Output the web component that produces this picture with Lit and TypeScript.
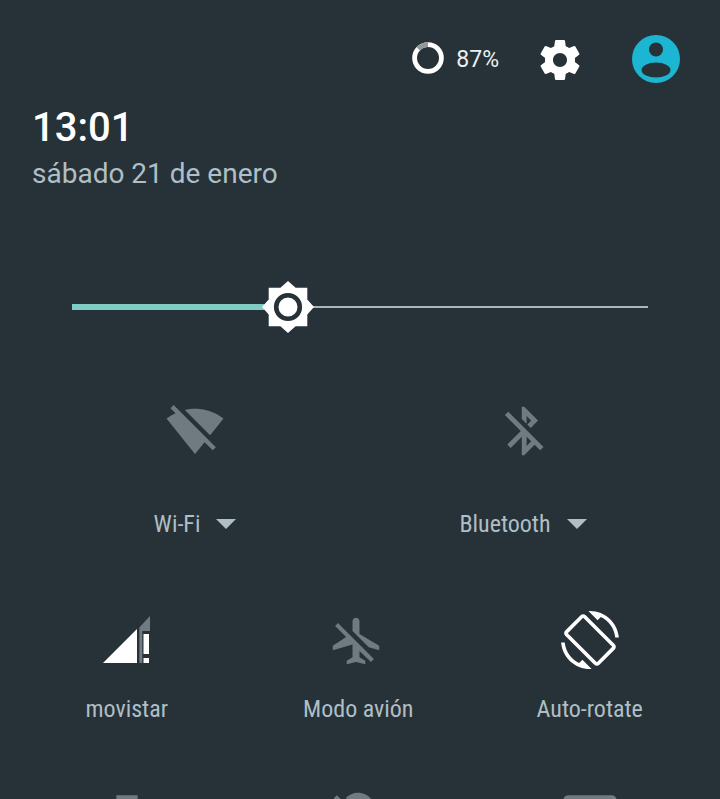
import { LitElement, html, css } from "lit";
import { customElement } from "lit/decorators.js";

const GEAR = "M19.43 12.98c.04-.32.07-.64.07-.98s-.03-.66-.07-.98l2.11-1.65c.19-.15.24-.42.12-.64l-2-3.46c-.12-.22-.39-.3-.61-.22l-2.49 1c-.52-.4-1.08-.73-1.69-.98l-.38-2.65C14.46 2.18 14.25 2 14 2h-4c-.25 0-.46.18-.49.42l-.38 2.65c-.61.25-1.17.59-1.69.98l-2.49-1c-.23-.09-.49 0-.61.22l-2 3.46c-.13.22-.07.49.12.64l2.11 1.65c-.04.32-.07.65-.07.98s.03.66.07.98l-2.11 1.65c-.19.15-.24.42-.12.64l2 3.46c.12.22.39.3.61.22l2.49-1c.52.4 1.08.73 1.69.98l.38 2.65c.03.24.24.42.49.42h4c.25 0 .46-.18.49-.42l.38-2.65c.61-.25 1.17-.59 1.69-.98l2.49 1c.23.09.49 0 .61-.22l2-3.46c.12-.22.07-.49-.12-.64l-2.11-1.65zM12 15.5c-1.93 0-3.5-1.57-3.5-3.5s1.57-3.5 3.5-3.5 3.5 1.57 3.5 3.5-1.57 3.5-3.5 3.5z";
const WIFI_OFF = "M23.64 7c-.45-.34-4.93-4-11.64-4-1.5 0-2.89.19-4.15.48L18.18 13.8 23.64 7zm-6.6 8.22L3.27 1.44 2 2.72l2.05 2.06C1.91 5.76.59 6.82.36 7l11.63 14.49.01.01.01-.01 3.9-4.86 3.32 3.32 1.27-1.27-3.46-3.46z";
const BT_OFF = "M13 5.83l1.88 1.88-1.6 1.6 1.41 1.41 3.02-3.02L12 2h-1v5.03l2 2v-3.2zM5.41 4L4 5.41 10.59 12 5 17.59 6.41 19 11 14.41V22h1l4.29-4.29 2.3 2.29L20 18.59 5.41 4zM13 18.17v-3.76l1.88 1.88L13 18.17z";
const PLANE_OFF = "M10.5 7.67V3.5c0-.83.67-1.5 1.5-1.5s1.5.67 1.5 1.5V9l8.5 5v2l-4.49-1.32-7.01-7.01zM19.73 19.73L5.5 5.5 4.27 4.27 3 5.54l4.73 4.73L2 14v2l8.5-2.5V19L8 20.5V22l4-1 4 1v-1.5L13.5 19v-2.73L18.46 21l1.27-1.27z";
const ROTATE = "M16.48 2.52c3.27 1.55 5.61 4.72 5.97 8.48h1.5C23.44 4.84 18.29 0 12 0l-.66.03 3.81 3.81 1.33-1.32zm-6.25-.77c-.59-.59-1.54-.59-2.12 0L1.75 8.11c-.59.59-.59 1.54 0 2.12l12.02 12.02c.59.59 1.54.59 2.12 0l6.36-6.36c.59-.59.59-1.54 0-2.12L10.23 1.75zm4.6 19.44L2.81 9.17l6.36-6.36 12.02 12.02-6.36 6.36zm-7.31.29C4.25 19.94 1.91 16.76 1.55 13H.05C.56 19.16 5.71 24 12 24l.66-.03-3.81-3.81-1.33 1.32z";
const LOCATION_OFF = "M12 6.5c1.38 0 2.5 1.12 2.5 2.5 0 .74-.33 1.39-.83 1.85l3.63 3.63c.98-1.86 1.7-3.8 1.7-5.48 0-3.87-3.13-7-7-7-1.98 0-3.76.83-5.04 2.15l3.19 3.19c.46-.52 1.11-.84 1.85-.84zm4.37 9.6l-4.63-4.63-.11-.11L3.27 3 2 4.27l3.18 3.18C5.07 7.95 5 8.47 5 9c0 5.25 7 13 7 13s1.67-1.85 3.38-4.35L18.73 21 20 19.73l-3.63-3.63z";
const CAST = "M21 3H3c-1.1 0-2 .9-2 2v3h2V5h18v14h-7v2h7c1.1 0 2-.9 2-2V5c0-1.1-.9-2-2-2zM1 18v3h3c0-1.66-1.34-3-3-3zm0-4v2c2.76 0 5 2.24 5 5h2c0-3.87-3.13-7-7-7zm0-4v2c4.97 0 9 4.03 9 9h2c0-6.08-4.93-11-11-11z";
const TORCH = "M7.6 3h8.8v2.2H7.6zM7.6 6h8.8v2l-2.4 4v9H10v-9L7.6 8z";

const icon = (d: string, on = false, box = "0 0 24 24") => html`<svg class="tile-icon ${on ? "on" : "off"}" viewBox=${box}><path d=${d}></path></svg>`;

@customElement("app-root")
export class AppRoot extends LitElement {
  static styles = css`
    :host { display: block; width: 720px; height: 799px; overflow: hidden; background: #263238; font-family: Roboto, "Liberation Sans", sans-serif; }
    .status { display: flex; align-items: center; justify-content: flex-end; padding: 35px 40px 0 0; height: 48px; }
    .battery { display: flex; align-items: center; gap: 12px; margin-top: 2px; margin-right: 37px; }
    .ring { width: 32px; height: 32px; display: block; margin-top: -5px; }
    .pct { font-size: 23px; line-height: 30px; color: #eceff1; }
    .gear { width: 48px; height: 48px; display: block; fill: #fff; margin-right: 48px; margin-top: 2px; }
    .avatar { width: 48px; height: 48px; display: block; }
    .clock { padding: 21px 0 0 32px; }
    .time { font-size: 40px; line-height: 48px; font-weight: 500; color: #fff; }
    .date { font-size: 28px; line-height: 36px; color: #b0bec5; margin-top: 4px; }
    .slider { position: relative; display: flex; align-items: center; height: 52px; margin: 89px 72px 0; }
    .fill { width: 193px; height: 6px; background: #80cbc4; }
    .rest { flex: 1; height: 2px; background: #aab5b5; }
    .thumb { position: absolute; left: 190px; top: 0; width: 52px; height: 52px; display: block; }
    .row { display: grid; justify-items: center; }
    .two { grid-template-columns: 328px 328px; padding-left: 31px; margin-top: 69px; }
    .two .tile { gap: 49px; }
    .three { grid-template-columns: repeat(3, 231.5px); padding-left: 11px; margin-top: 72px; }
    .last { margin-top: 64px; }
    .tile { display: flex; flex-direction: column; align-items: center; gap: 25px; }
    .tile-icon { width: 58px; height: 58px; display: block; }
    .off { fill: #6f7b80; }
    .on { fill: #fff; }
    .label { display: flex; align-items: center; gap: 16px; font-size: 24px; line-height: 30px; color: #b0bec5; font-stretch: 87%; white-space: nowrap; }
    .caret { width: 0; height: 0; border-left: 10px solid transparent; border-right: 10px solid transparent; border-top: 10px solid #b0bec5; }
    .sig-white { fill: #fff; }
    .sig-dim { fill: #6f7b80; }
  `;

  render() {
    return html`
      <div class="status">
        <div class="battery">
          <svg class="ring" viewBox="0 0 32 32">
            <circle cx="16" cy="16" r="13.4" fill="none" stroke="#fff" stroke-width="4.8"></circle>
            <path d="M16 2.6A13.4 13.4 0 0 0 6.2 6.9" fill="none" stroke="#90999d" stroke-width="4.8"></path>
          </svg>
          <span class="pct">87%</span>
        </div>
        <svg class="gear" viewBox="0 0 24 24"><path d=${GEAR}></path></svg>
        <svg class="avatar" viewBox="0 0 48 48">
          <circle cx="24" cy="24" r="24" fill="#1cb6d2"></circle>
          <circle cx="24" cy="14.5" r="7" fill="#263238"></circle>
          <ellipse cx="24" cy="35" rx="14.5" ry="7.5" fill="#263238"></ellipse>
        </svg>
      </div>
      <div class="clock">
        <div class="time">13:01</div>
        <div class="date">sábado 21 de enero</div>
      </div>
      <div class="slider">
        <div class="fill"></div>
        <div class="rest"></div>
        <svg class="thumb" viewBox="0 0 52 52">
          <path d="M26 0L33.6 6.7H45.3V18.4L52 26L45.3 33.6V45.3H33.6L26 52L18.4 45.3H6.7V33.6L0 26L6.7 18.4V6.7H18.4Z" fill="#fff"></path>
          <circle cx="26" cy="26" r="11.8" fill="#fff" stroke="#263238" stroke-width="4.6"></circle>
        </svg>
      </div>
      <div class="row two">
        <div class="tile">${icon(WIFI_OFF, false, "0.16 0.22 23.67 23.67")}<div class="label"><span>Wi-Fi</span><span class="caret"></span></div></div>
        <div class="tile">${icon(BT_OFF, false, "-0.5 0 24 24")}<div class="label"><span>Bluetooth</span><span class="caret"></span></div></div>
      </div>
      <div class="row three">
        <div class="tile">
          <svg class="tile-icon" viewBox="0 0 58 58">
            <path class="sig-white" d="M5 52H39V18Z"></path>
            <path class="sig-dim" d="M41.3 16.5L52 5V20H44.3V52H41.3Z"></path>
            <path class="sig-white" d="M45.5 23H51V43H45.5ZM45.5 47H51V52H45.5Z"></path>
          </svg>
          <div class="label"><span>movistar</span></div>
        </div>
        <div class="tile">${icon(PLANE_OFF, false, "0.36 -0.93 25 25")}<div class="label"><span>Modo avión</span></div></div>
        <div class="tile">${icon(ROTATE, true)}<div class="label"><span>Auto-rotate</span></div></div>
      </div>
      <div class="row three last">
        <div class="tile">${icon(TORCH)}</div>
        <div class="tile">${icon(LOCATION_OFF)}</div>
        <div class="tile">${icon(CAST)}</div>
      </div>
    `;
  }
}
